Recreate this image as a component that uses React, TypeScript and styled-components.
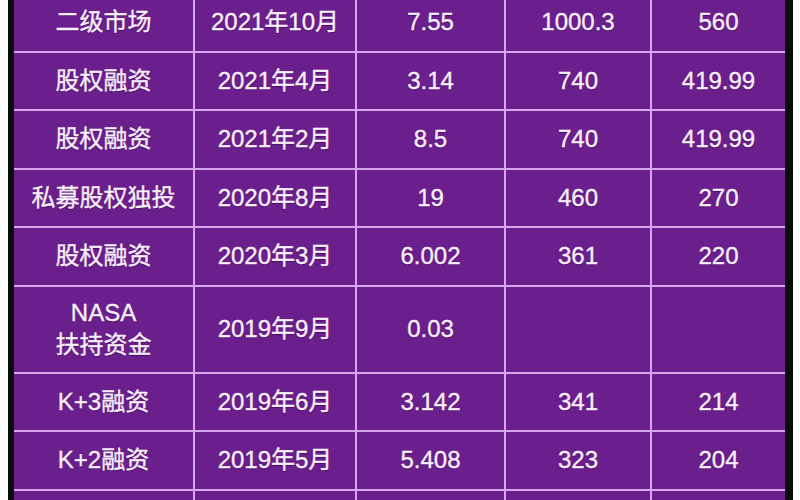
import { Fragment } from "react";
import styled, { createGlobalStyle } from "styled-components";

const GlobalStyle = createGlobalStyle`
  html, body {
    margin: 0;
    padding: 0;
    background: #ffffff;
    overflow: hidden;
  }
`;

type Row = {
  kind: string[];
  date: string;
  amount: string;
  before: string;
  after: string;
  tall?: boolean;
};

const rows: Row[] = [
  { kind: ["二级市场"], date: "2021年10月", amount: "7.55", before: "1000.3", after: "560" },
  { kind: ["股权融资"], date: "2021年4月", amount: "3.14", before: "740", after: "419.99" },
  { kind: ["股权融资"], date: "2021年2月", amount: "8.5", before: "740", after: "419.99" },
  { kind: ["私募股权独投"], date: "2020年8月", amount: "19", before: "460", after: "270" },
  { kind: ["股权融资"], date: "2020年3月", amount: "6.002", before: "361", after: "220" },
  { kind: ["NASA", "扶持资金"], date: "2019年9月", amount: "0.03", before: "", after: "", tall: true },
  { kind: ["K+3融资"], date: "2019年6月", amount: "3.142", before: "341", after: "214" },
  { kind: ["K+2融资"], date: "2019年5月", amount: "5.408", before: "323", after: "204" },
  // the next row only peeks in at the bottom edge, its text is out of view
  { kind: [], date: "", amount: "", before: "", after: "" },
];

const Page = styled.div`
  padding: 0 7px 0 8px;
  height: 500px;
  overflow: hidden;
`;

const Frame = styled.div`
  border-left: 6px solid #0c0c0c;
  border-right: 8px solid #0c0c0c;
  margin-top: -6px;
`;

const Grid = styled.div`
  display: grid;
  grid-template-columns: 179px 160px 147px 144px 133px;
  gap: 2px;
  background: #d7a6ee;
`;

const Cell = styled.div<{ $tall?: boolean }>`
  background: #6b1f8c;
  height: ${(p) => (p.$tall ? "85px" : "56.5px")};
  display: flex;
  flex-direction: column;
  align-items: center;
  justify-content: center;
  color: #f9eefc;
  font-family: "Liberation Sans", "Noto Sans CJK SC", Arial, sans-serif;
  font-size: 24px;
  line-height: 32px;
  -webkit-text-stroke: 0.35px #f9eefc;
  text-shadow: 0 1px 1px rgba(40, 0, 60, 0.55);
  white-space: nowrap;
`;

export default function App() {
  return (
    <>
      <GlobalStyle />
      <Page>
        <Frame>
          <Grid>
            {rows.map((r, i) => (
              <Fragment key={i}>
                <Cell $tall={r.tall}>
                  {r.kind.map((t) => (
                    <span key={t}>{t}</span>
                  ))}
                </Cell>
                <Cell $tall={r.tall}>{r.date}</Cell>
                <Cell $tall={r.tall}>{r.amount}</Cell>
                <Cell $tall={r.tall}>{r.before}</Cell>
                <Cell $tall={r.tall}>{r.after}</Cell>
              </Fragment>
            ))}
          </Grid>
        </Frame>
      </Page>
    </>
  );
}
